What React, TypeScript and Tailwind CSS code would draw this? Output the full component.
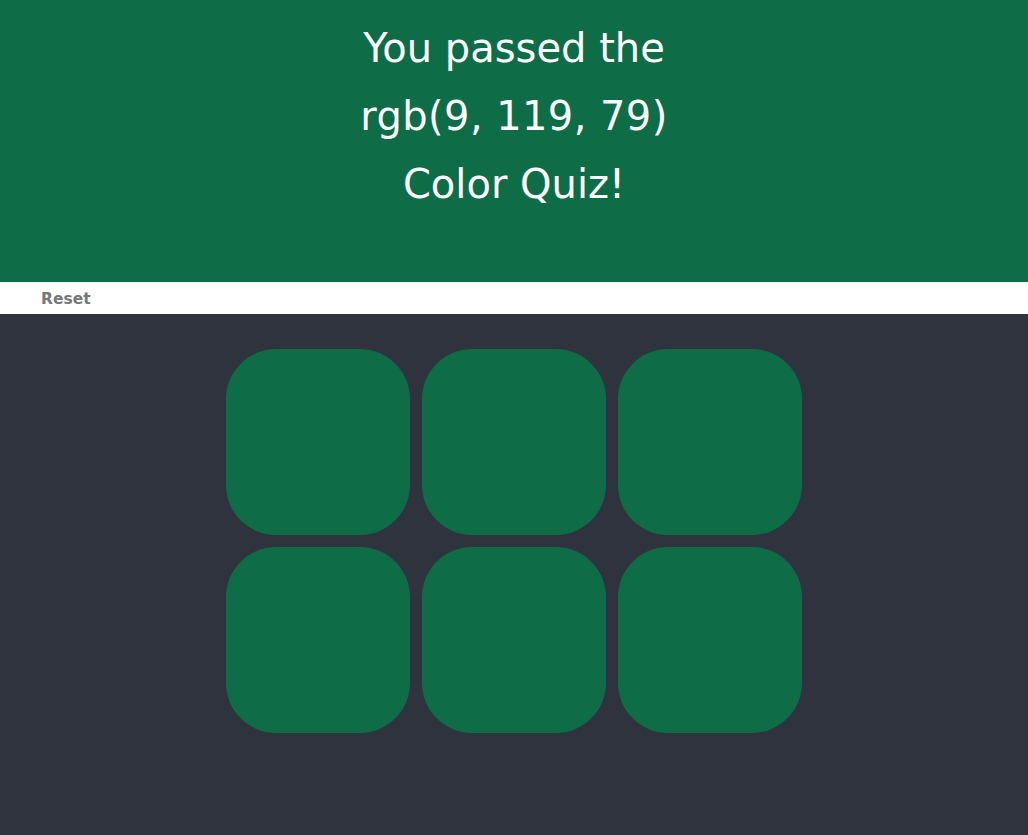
export default function App() {
  const squares = [0, 1, 2, 3, 4, 5];
  return (
    <div className="min-h-[835px] bg-[#2e333d] flex flex-col" style={{ fontFamily: '"DejaVu Sans", Verdana, sans-serif' }}>
      <div className="h-[282px] bg-[#0e6c47] text-white text-center text-[40px] leading-[68px] pt-[14px]">
        <div>You passed the</div>
        <div className="tracking-[0.4px]">rgb(9, 119, 79)</div>
        <div>Color Quiz!</div>
      </div>
      <div className="h-[32px] bg-white flex items-center pl-[41px] pt-[3px]">
        <span className="text-[15.5px] font-bold text-[#777777]">Reset</span>
      </div>
      <div className="flex justify-center pt-[35px]">
        <div className="grid grid-cols-[184px_184px_184px] gap-[12px]">
          {squares.map((i) => (
            <div key={i} className="w-[184px] h-[186px] rounded-[50px] bg-[#0e6c47]" />
          ))}
        </div>
      </div>
    </div>
  );
}
